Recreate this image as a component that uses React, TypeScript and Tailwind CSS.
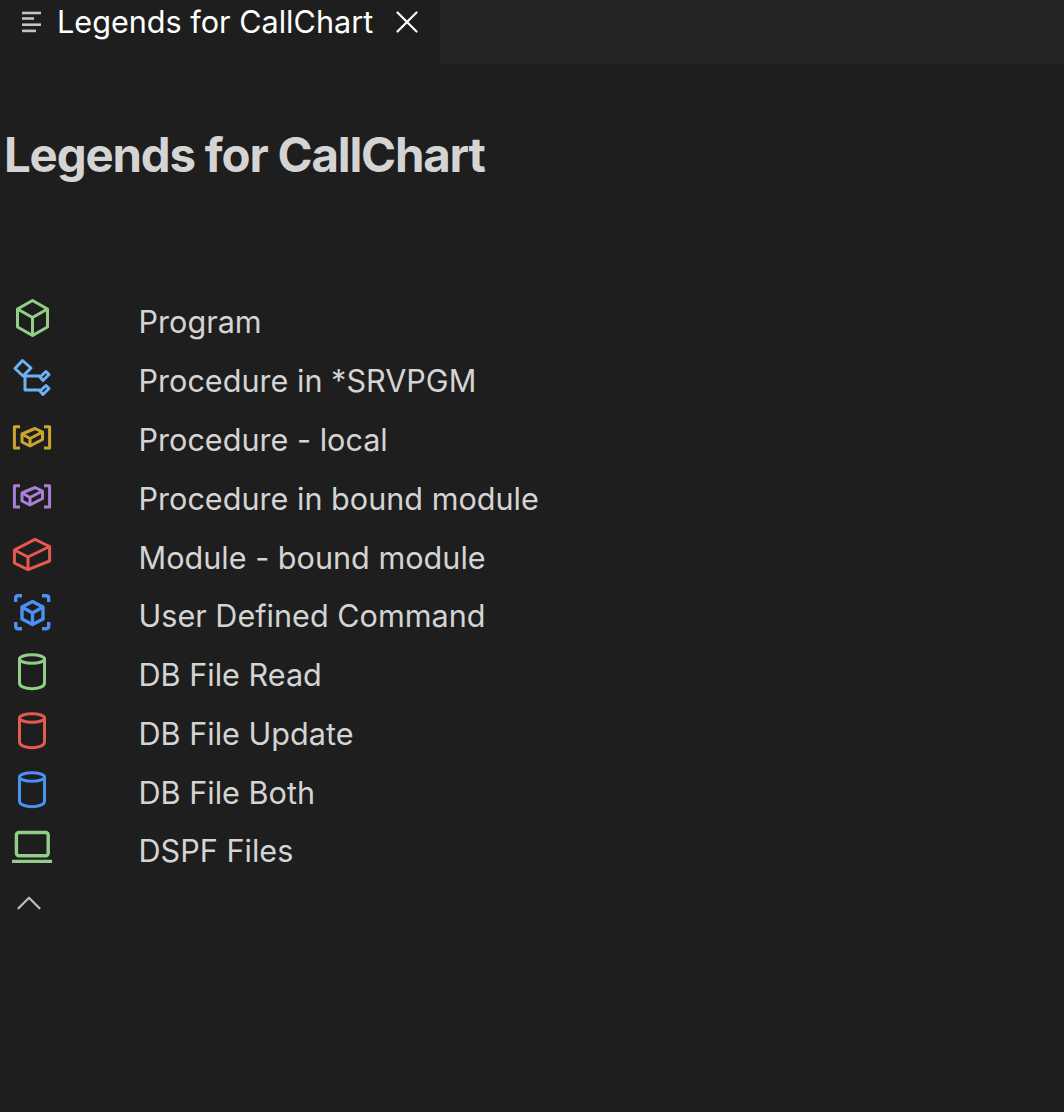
import React from "react";
import { X, ChevronUp } from "lucide-react";

const GREEN = "#93ce89";
const RED = "#e5594f";
const BLUE = "#4c8ff5";

function Cube({ color }: { color: string }) {
  return (
    <svg width="40" height="40" viewBox="0 0 40 40" fill="none" stroke={color} strokeWidth="3" strokeLinejoin="round">
      <path d="M20.5 2.5 L35.5 11 V29 L20.5 37.5 L5.5 29 V11 Z" />
      <path d="M5.5 11 L20.5 19.5 L35.5 11 M20.5 19.5 V37.5" />
    </svg>
  );
}

function Components() {
  return (
    <svg width="40" height="40" viewBox="0 0 40 40" fill="none" stroke="#6cb0f5" strokeWidth="3" strokeLinejoin="round">
      <path d="M3 11.5 L10.5 3.5 L19 11 L11 19 Z" />
      <path d="M13 19 H28 M13 19 V33 H28" />
      <path d="M28 20 L34 14.5 L37 17.5 L31 23.5 Z" />
      <path d="M28 34 L34 28.5 L37 31.5 L31 37.5 Z" />
    </svg>
  );
}

function Bracketed({ color }: { color: string }) {
  return (
    <svg width="40" height="40" viewBox="0 0 40 40" fill="none" stroke={color} strokeWidth="3" strokeLinejoin="round">
      <path d="M8 10.8 H2.4 V32 H8 M32 10.8 H37.6 V32 H32" />
      <path d="M10 18 L23 12.5 L30.5 16 V23.5 L18 30 L10 26 Z" />
      <path d="M10 18 L18 22.5 L30.5 16 M18 22.5 V30" />
    </svg>
  );
}

function Box() {
  return (
    <svg width="40" height="40" viewBox="0 0 40 40" fill="none" stroke={RED} strokeWidth="3" strokeLinejoin="round">
      <path d="M2.4 16 L23 5.4 L37.6 12.5 V27 L16 35.6 L2.4 29 Z" />
      <path d="M2.4 16 L16 23 L37.6 12.5 M16 23 V35.6" />
    </svg>
  );
}

function FocusCube() {
  return (
    <svg width="40" height="40" viewBox="0 0 40 40" fill="none" stroke={BLUE} strokeWidth="3.4" strokeLinejoin="round">
      <path d="M3.7 10 V6 Q3.7 3.7 6 3.7 H10 M30 3.7 H34 Q36.7 3.7 36.7 6 V10 M36.7 30 V34 Q36.7 36.7 34 36.7 H30 M10 36.7 H6 Q3.7 36.7 3.7 34 V30" />
      <path d="M20.5 9.5 L31 15 V27 L20.5 32.5 L10 27 V15 Z" />
      <path d="M10 15 L20.5 21 L31 15 M20.5 21 V32.5" />
    </svg>
  );
}

function Cylinder({ color }: { color: string }) {
  return (
    <svg width="40" height="40" viewBox="0 0 40 40" fill="none" stroke={color} strokeWidth="3">
      <ellipse cx="20" cy="8" rx="12.5" ry="4.3" />
      <path d="M7.5 8 V32 C7.5 35.5 13 37.7 20 37.7 C27 37.7 32.5 35.5 32.5 32 V8" />
    </svg>
  );
}

function Laptop() {
  return (
    <svg width="40" height="40" viewBox="0 0 40 40" fill="none" stroke={GREEN} strokeWidth="3.4">
      <rect x="4.4" y="5.5" width="31.8" height="23.3" rx="2.5" />
      <path d="M0 34.4 H40" />
    </svg>
  );
}

const legends: { icon: React.ReactNode; label: string }[] = [
  { icon: <Cube color={GREEN} />, label: "Program" },
  { icon: <Components />, label: "Procedure in *SRVPGM" },
  { icon: <Bracketed color="#cca52f" />, label: "Procedure - local" },
  { icon: <Bracketed color="#ab7fd6" />, label: "Procedure in bound module" },
  { icon: <Box />, label: "Module - bound module" },
  { icon: <FocusCube />, label: "User Defined Command" },
  { icon: <Cylinder color={GREEN} />, label: "DB File Read" },
  { icon: <Cylinder color={RED} />, label: "DB File Update" },
  { icon: <Cylinder color={BLUE} />, label: "DB File Both" },
  { icon: <Laptop />, label: "DSPF Files" },
];

export default function App() {
  return (
    <div className="min-h-[1112px] bg-[#1e1e1e] text-[#d4d4d4] font-['Inter',sans-serif]">
      <div className="flex h-[64px] bg-[#252526]">
        <div className="flex h-full w-[440px] items-start bg-[#1e1e1e] pl-[21px] pt-[4px]">
          <svg width="22" height="22" viewBox="0 0 22 22" className="mt-[7px]" fill="#c4c4c4">
            <rect x="1" y="0.7" width="19" height="2.6" />
            <rect x="1" y="6.2" width="12" height="2.6" />
            <rect x="1" y="12.4" width="19" height="2.6" />
            <rect x="1" y="18.6" width="14" height="2.6" />
          </svg>
          <span className="ml-[14px] text-[30.6px] leading-[36px] text-white">Legends for CallChart</span>
          <X className="ml-[15px] -mt-[1px] text-white" size={38} strokeWidth={1.4} />
        </div>
      </div>
      <h1 className="mt-[61px] pl-[4px] text-[47.4px] leading-[60px] font-bold tracking-[-0.025em]">Legends for CallChart</h1>
      <div className="mt-[115.45px] pl-[12px]">
        {legends.map((l) => (
          <div key={l.label} className="flex h-[58.78px] items-start">
            <div className="-mt-[2px] w-[127px] shrink-0">{l.icon}</div>
            <span className="-ml-[0.5px] text-[30.6px] leading-[40px] pt-[2px]">{l.label}</span>
          </div>
        ))}
        <ChevronUp className="-ml-[4px] -mt-[6px] text-[#bdbdbd]" size={42} strokeWidth={1.3} />
      </div>
    </div>
  );
}
